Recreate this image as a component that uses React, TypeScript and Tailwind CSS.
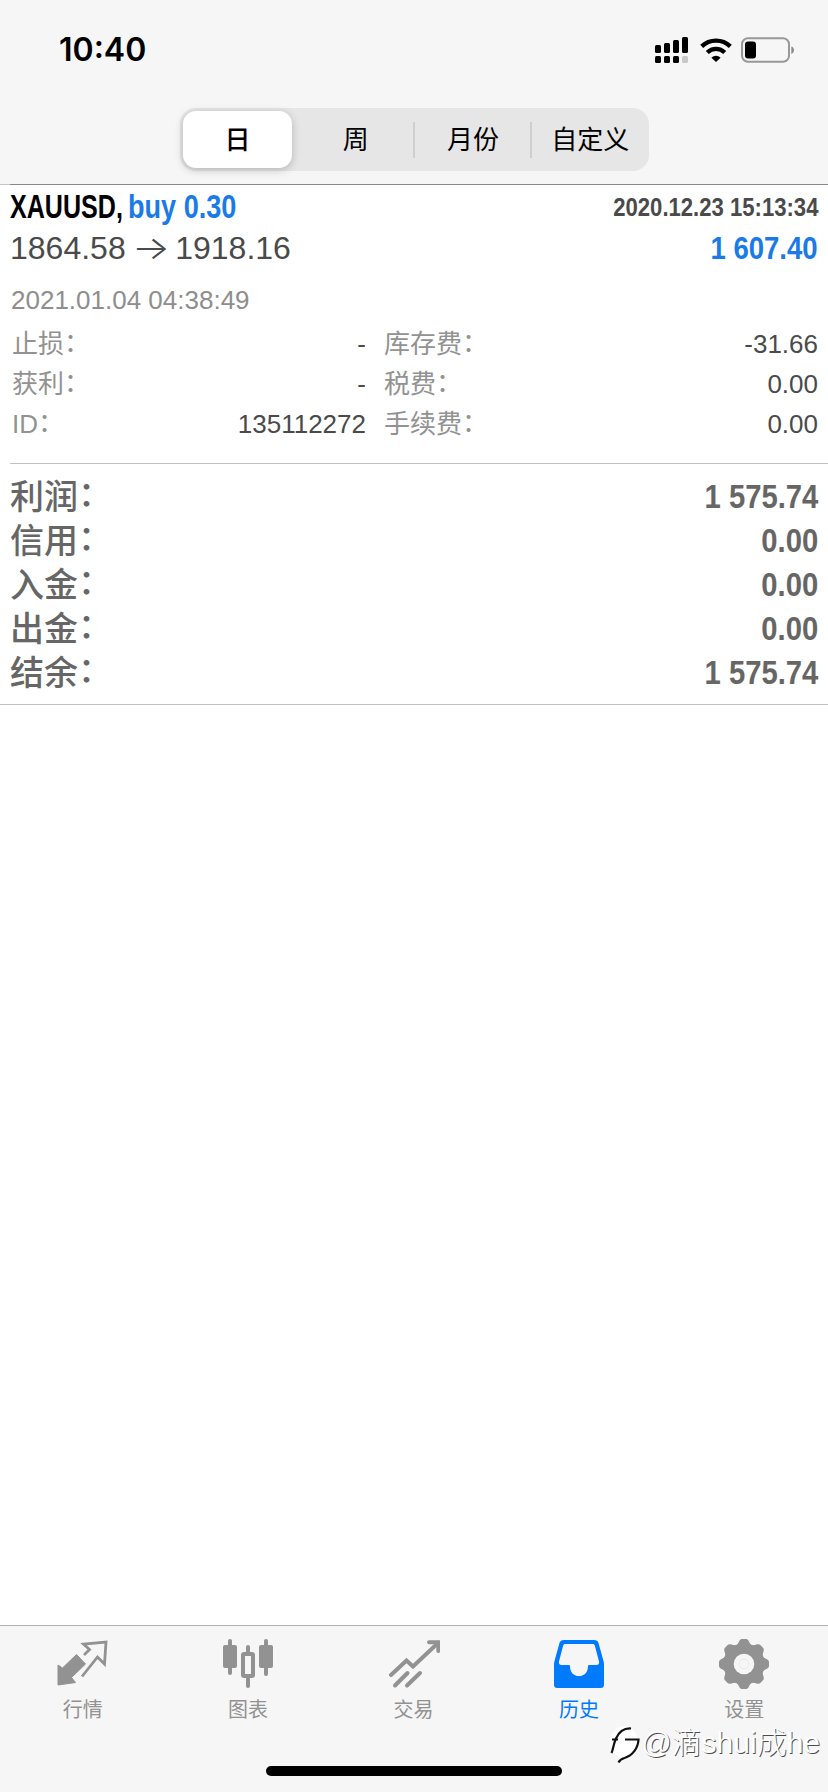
import React from 'react';

interface Detail {
  label: string;
  value: string;
}

const periods = ['日', '周', '月份', '自定义'];

const leftDetails: Detail[] = [
  { label: '止损', value: '-' },
  { label: '获利', value: '-' },
  { label: 'ID', value: '135112272' },
];

const rightDetails: Detail[] = [
  { label: '库存费', value: '-31.66' },
  { label: '税费', value: '0.00' },
  { label: '手续费', value: '0.00' },
];

const totals: Detail[] = [
  { label: '利润', value: '1 575.74' },
  { label: '信用', value: '0.00' },
  { label: '入金', value: '0.00' },
  { label: '出金', value: '0.00' },
  { label: '结余', value: '1 575.74' },
];

const StatusBar: React.FC = () => (
  <div className="flex h-[100px] items-center justify-between pl-[59px] pr-[33px]">
    <span className="font-['Inter',sans-serif] text-[32px] leading-none font-semibold text-black">10:40</span>
    <div className="flex items-center">
      <svg width="34" height="28" viewBox="0 0 34 28">
        <rect x="0" y="9" width="6" height="8" rx="1.5" />
        <rect x="9" y="7" width="6" height="10" rx="1.5" />
        <rect x="18" y="4" width="6" height="13" rx="1.5" />
        <rect x="27" y="1" width="6" height="16" rx="1.5" />
        <rect x="0" y="20" width="6" height="7" rx="1.5" />
        <rect x="9" y="20" width="6" height="7" rx="1.5" />
        <rect x="18" y="20" width="6" height="7" rx="1.5" />
        <rect x="27" y="20" width="6" height="7" rx="1.5" fill="#c8c8c8" />
      </svg>
      <svg className="ml-[11px]" width="32" height="24" viewBox="0 0 32 24" fill="none" stroke="#000" strokeWidth="4.3">
        <path d="M1.7 8.4a20.5 20.5 0 0 1 28.6 0" />
        <path d="M7.3 14.4a12.3 12.3 0 0 1 17.4 0" />
        <path d="M16 24l-4.6-4.3a6.6 6.6 0 0 1 9.2 0z" fill="#000" stroke="none" />
      </svg>
      <svg className="ml-[9px]" width="54" height="26" viewBox="0 0 54 26">
        <rect x="1" y="1.2" width="47" height="23.6" rx="6" fill="none" stroke="#989898" strokeWidth="2" />
        <rect x="4" y="4.5" width="11" height="17" rx="3" />
        <path d="M50.3 9.5c3.6.8 3.6 6.4 0 7.4z" fill="#8c8c8c" />
      </svg>
    </div>
  </div>
);

const PeriodPicker: React.FC = () => (
  <div className="mx-auto mt-2 mb-[13px] flex h-[63px] w-[469px] rounded-[16px] bg-[#e6e6e6]">
    {periods.map((period, i) => (
      <div key={period} className="flex flex-1 items-center">
        <div
          className={
            i === 0
              ? 'ml-[3px] mr-[5px] flex h-[57px] flex-1 items-center justify-center rounded-[13px] bg-white text-[26px] font-medium shadow-[0_2px_8px_rgba(0,0,0,0.22)]'
              : 'flex h-[57px] flex-1 items-center justify-center text-[26px]'
          }
        >
          <span className="pt-px pl-px leading-none">{period}</span>
        </div>
        {(i === 1 || i === 2) && <div className="-mx-px h-9 w-[2px] bg-[#cfcfcf]" />}
      </div>
    ))}
  </div>
);

const DetailColumn: React.FC<{ items: Detail[] }> = ({ items }) => (
  <>
    {items.map((item) => (
      <div key={item.label} className="flex h-10 items-center justify-between text-[26px] leading-none">
        <span className="text-[#929292]">
          {item.label}
          <span className="inline-block -translate-y-px">：</span>
        </span>
        <span className="text-[#4a4a4a]">{item.value}</span>
      </div>
    ))}
  </>
);

const Position: React.FC = () => (
  <section className="ml-[10px] h-[279px] border-b border-[#c0c0c0] pr-[10px] pt-[3px]">
    <div className="flex h-[37px] items-center justify-between leading-none font-bold">
      <span className="flex text-[33px] whitespace-nowrap text-black">
        <span className="w-[118px] origin-left scale-x-[0.76]">XAUUSD,</span>
        <span className="origin-left scale-x-[0.82] text-[#1a7be8]">buy 0.30</span>
      </span>
      <span className="origin-right scale-x-[0.85] text-[26px] whitespace-nowrap text-[#4a4a4a]">2020.12.23 15:13:34</span>
    </div>
    <div className="flex h-[46px] items-center justify-between leading-none">
      <span className="flex items-center text-[32px] text-[#4a4a4a]">
        1864.58
        <span className="mr-[13px] ml-[6px] origin-left scale-x-[1.25] font-['Inter',sans-serif] font-light">→</span>
        1918.16
      </span>
      <span className="origin-right scale-x-[0.86] text-[32px] font-bold text-[#1a7be8]">1 607.40</span>
    </div>
    <div className="mt-[9px] flex h-10 items-center pl-px text-[26px] leading-none text-[#8e8e8e]">2021.01.04 04:38:49</div>
    <div className="mt-1 flex gap-[18px] pl-[2px]">
      <div className="w-[354px]">
        <DetailColumn items={leftDetails} />
      </div>
      <div className="flex-1">
        <DetailColumn items={rightDetails} />
      </div>
    </div>
  </section>
);

const Totals: React.FC = () => (
  <section className="h-[241px] border-b border-[#c0c0c0] px-[10px] pt-[10px]">
    {totals.map((item) => (
      <div key={item.label} className="flex h-11 items-center justify-between text-[34px] leading-none text-[#666]">
        <span className="pt-px font-medium">
          {item.label}
          <span className="inline-block -translate-y-[3px]">：</span>
        </span>
        <span className="origin-right scale-x-[0.86] font-bold">{item.value}</span>
      </div>
    ))}
  </section>
);

const QuotesIcon: React.FC = () => (
  <svg width="52" height="52" viewBox="1 0 52 52">
    <path d="M20.500 15.500 29.500 25 15.500 38.500 19.500 43.500 2 46V26L6.500 29z" fill="#929292" stroke="#929292" strokeLinejoin="round" />
    <path d="M28 16l5.500-5.500-6-5.500 22.500-2-1.500 22-7-7L26 37.500" fill="none" stroke="#929292" strokeWidth="2.800" />
  </svg>
);

const ChartIcon: React.FC = () => (
  <svg width="52" height="52" viewBox="0 0 52 52" fill="#929292">
    <rect x="1" y="6" width="14" height="23" rx="2" />
    <rect x="6" y="0" width="4" height="36" rx="2" />
    <rect x="37" y="6" width="14" height="23" rx="2" />
    <rect x="42" y="0" width="4" height="37" rx="2" />
    <rect x="21" y="15" width="10" height="22" rx="1" fill="none" stroke="#929292" strokeWidth="4" />
    <rect x="24" y="6" width="4" height="9" rx="2" />
    <rect x="24" y="37" width="4" height="12" rx="2" />
  </svg>
);

const TradeIcon: React.FC = () => (
  <svg width="52" height="52" viewBox="0 0 52 52" fill="none" stroke="#929292" strokeWidth="4" strokeLinecap="round">
    <path d="M3 36 18.500 21.500l6.500 6L50 4" />
    <path d="M41 3.200h9.300V12" />
    <path d="M7 46.500 19.500 34" />
    <path d="M19 46.500 32 34" />
  </svg>
);

const HistoryIcon: React.FC = () => (
  <svg width="52" height="52" viewBox="0 0 52 52">
    <path
      fillRule="evenodd"
      fill="#007aff"
      d="M11 1h30c2.500 0 3.900 1 4.600 3.300L50.500 22c.5 1.500.5 3 .5 5v18.500c0 2.500-1 3.500-3.500 3.500h-43C2 49 1 48 1 45.500V27c0-2 0-3.500.5-5L6.400 4.300C7.100 2 8.500 1 11 1zM12.500 5c-1.300 0-2 .5-2.400 1.700L6 22.500c-.4 2 .5 3.500 2.500 3.500h7c1.200 0 1.600.6 1.600 1.700 0 5.500 3.400 9.300 8.900 9.300s8.900-3.800 8.900-9.300c0-1.100.4-1.700 1.600-1.700h7c2 0 2.900-1.500 2.500-3.500L41.900 6.700C41.500 5.500 40.800 5 39.500 5z"
    />
  </svg>
);

const SettingsIcon: React.FC = () => (
  <svg width="52" height="52" viewBox="0 0 52 52">
    <g fill="#929292">
      <circle cx="26" cy="25" r="20.500" />
      {[0, 45, 90, 135, 180, 225, 270, 315].map((angle) => (
        <path key={angle} transform={`rotate(${angle} 26 25)`} d="M16 7c3.500-1 4-2.500 5-4.500C22 .5 23 0 24.500 0h3C29 0 30 .5 31 2.500c1 2 1.500 3.500 5 4.500z" />
      ))}
    </g>
    <circle cx="26" cy="25" r="10.300" fill="#f6f6f6" />
    <circle cx="26" cy="25" r="5" fill="none" stroke="#eaeaea" />
  </svg>
);

const tabs = [
  { label: '行情', icon: <QuotesIcon />, active: false },
  { label: '图表', icon: <ChartIcon />, active: false },
  { label: '交易', icon: <TradeIcon />, active: false },
  { label: '历史', icon: <HistoryIcon />, active: true },
  { label: '设置', icon: <SettingsIcon />, active: false },
];

const TabBar: React.FC = () => (
  <nav className="h-[167px] border-t border-[#b0b0b0] bg-[#f6f6f6]">
    <div className="flex pt-[13px] pr-px">
      {tabs.map((tab) => (
        <div key={tab.label} className="flex flex-1 flex-col items-center">
          {tab.icon}
          <span className={tab.active ? 'mt-[9px] text-[20px] leading-5 text-[#007aff]' : 'mt-[9px] text-[20px] leading-5 text-[#929292]'}>
            {tab.label}
          </span>
        </div>
      ))}
    </div>
  </nav>
);

const Watermark: React.FC = () => (
  <div className="absolute right-[8px] bottom-[29px] flex items-center">
    <svg width="34" height="40" viewBox="0 0 34 40" fill="none">
      <ellipse cx="17" cy="19" rx="14" ry="16" fill="#fff" />
      <path d="M4.500 30C6 27 6.500 21 9 15.500 12 9 17 5 24 5.500" stroke="#111" strokeWidth="2.200" />
      <path d="M5 16.500h6M18 16.500h13.500c-.5 9-6 16-14 18.500-3.500 1-5 2.500-6 4.500" stroke="#111" strokeWidth="2.200" />
    </svg>
    <span className="text-[30px] leading-10 font-light whitespace-nowrap text-white [text-shadow:1px_1px_0_rgba(0,0,0,0.7)]">
      @滴shui成he
    </span>
  </div>
);

const App: React.FC = () => {
  return (
    <div className="relative flex h-[1792px] w-[828px] flex-col bg-white font-['Liberation_Sans','Noto_Sans_CJK_SC',sans-serif]">
      <header className="h-[185px] bg-[#f6f6f6]">
        <StatusBar />
        <PeriodPicker />
        {/* the rule is paler under the list's left inset */}
        <div className="h-px bg-[#c4c4c4] pl-[10px]">
          <div className="h-px bg-[#888]" />
        </div>
      </header>
      <main className="flex-1">
        <Position />
        <Totals />
      </main>
      <TabBar />
      <Watermark />
      <div className="absolute bottom-4 left-[266px] h-[10px] w-[296px] rounded-full bg-black" />
    </div>
  );
};

export default App;
